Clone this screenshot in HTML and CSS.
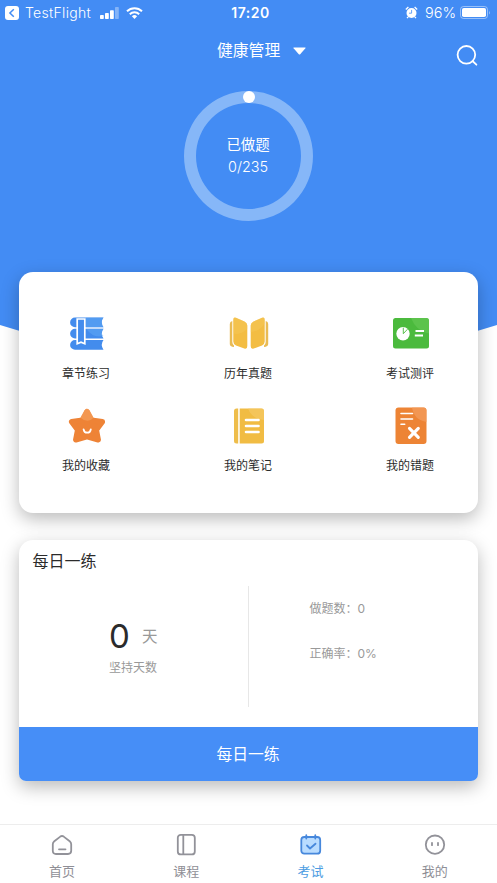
FILE: index.html
```html
<!DOCTYPE html>
<html lang="zh-CN">
<head>
<meta charset="utf-8">
<meta name="viewport" content="width=device-width, initial-scale=1">
<title>健康管理</title>
<link rel="stylesheet" href="styles.css">
</head>
<body>
<div class="app">
  <header class="hero">
    <div class="status">
      <div class="status-left">
        <svg width="14" height="14" viewBox="0 0 14 14"><rect width="14" height="14" rx="3" fill="#fff"/><path d="M8.8 3.2 4.9 7l3.9 3.8" fill="none" stroke="#438cf4" stroke-width="1.5"/></svg>
        <span class="carrier">TestFlight</span>
        <svg class="signal" width="19" height="12" viewBox="0 0 19 12" fill="#fff"><rect y="8" width="3.8" height="4" rx=".8"/><rect x="5" y="6" width="3.8" height="6" rx=".8"/><rect x="10" y="3.3" width="3.8" height="8.7" rx=".8"/><rect x="15" width="3.8" height="12" rx=".8" opacity=".35"/></svg>
        <svg class="wifi" width="17" height="12" viewBox="0 0 17 12"><g fill="none" stroke="#fff" stroke-width="2"><path d="M1 4.3a10.7 10.7 0 0 1 15 0"/><path d="M3.8 7.2a6.7 6.7 0 0 1 9.4 0"/></g><path d="M5.9 9.3a3.7 3.7 0 0 1 5.2 0L8.5 12z" fill="#fff"/></svg>
      </div>
      <div class="clock">17:20</div>
      <div class="status-right">
        <svg width="13" height="13" viewBox="0 0 13 13"><circle cx="6.5" cy="7" r="5" fill="#fff"/><path d="M.8 3.5 3.4 1M12.2 3.5 9.6 1M3.2 10.8 2 12.2M9.8 10.8l1.2 1.4" stroke="#fff" stroke-width="1.3"/><path d="M6.6 3.9v3.3H4" fill="none" stroke="#438cf4" stroke-width=".8"/></svg>
        <span class="percent">96%</span>
        <svg width="31" height="13" viewBox="0 0 31 13"><rect x=".5" y=".5" width="27" height="12" rx="3" fill="none" stroke="#fff" stroke-opacity=".45"/><rect x="2" y="2" width="24" height="9" rx="1.8" fill="#fff"/><path d="M29 4.5q1.7 2 0 4z" fill="#fff" opacity=".45"/></svg>
      </div>
    </div>
    <div class="titlebar">
      <span class="subject">健康管理</span>
      <svg class="caret" width="13" height="8" viewBox="0 0 13 8"><path d="M.8.5h11.4Q13 .5 12.4 1.2L7.2 7.2q-.7.7-1.4 0L.6 1.2Q0 .5.8.5z" fill="#fff"/></svg>
      <svg class="search" width="22" height="22" viewBox="0 0 22 22" fill="none" stroke="#fff" stroke-width="1.8" stroke-linecap="round"><circle cx="10.4" cy="9.8" r="8.8"/><path d="m16.500 16 3.900 3.700"/></svg>
    </div>
    <div class="ring">
      <span>已做题</span>
      <span>0/235</span>
    </div>
  </header>

  <main>
    <section class="card menu">
      <div class="item">
        <svg width="36" height="36" viewBox="0 0 36 36"><g fill="#438ced"><path d="M6 1.500H34.500q-3.500 4.700 0 9.800H6a4.900 4.900 0 0 1 0-9.800z"/><path d="M6 12.700H34.500q-3.500 4.700 0 9.800H6a4.900 4.900 0 0 1 0-9.800z"/><path d="M6 24H34.500q-3.500 4.700 0 9.800H6A4.900 4.900 0 0 1 6 24z"/></g><path d="M17 1.500h17.500q-3.500 4.700 0 9.800H17zM17 12.700h17.500q-3.500 4.700 0 7Q25 23 17 12.700z" fill="#62a9f5" opacity=".5"/><path d="M8.200 3h7.600v24.700l-3.800-1.500-3.800 1.500z" fill="#438ced" stroke="#fff" stroke-width="1.700"/></svg>
        <span>章节练习</span>
      </div>
      <div class="item">
        <svg width="40" height="36" viewBox="0 0 40 36"><path d="M3.300 5Q.8 5.500.8 8v20q0 2.700 4.200 3V29.500Q3.300 28 3.300 26zM36.700 5q2.500.5 2.500 3v20q0 2.700-4.200 3V29.500q1.700-1.500 1.700-3.500z" fill="#e9bb55"/><path d="M7 1.700 15.500 5.500q2.800 1.300 2.800 4v20.500q0 3.600-3 2.600L7 29.500q-2.700-1.200-2.700-4V3.700Q4.300.7 7 1.700zM33 1.700 24.500 5.500q-2.800 1.300-2.800 4v20.500q0 3.600 3 2.600L33 29.500q2.700-1.200 2.700-4V3.700Q35.700.7 33 1.700z" fill="#f3bd43"/><path d="M7 1.700 15.500 5.500q2.800 1.300 2.800 4V13Q10 20 4.300 17V3.700Q4.300.7 7 1.700zM33 1.700 24.500 5.500q-2.800 1.300-2.800 4V16q10-1 14-9V3.700Q35.700.7 33 1.700z" fill="#f7ca60" opacity=".35"/></svg>
        <span>历年真题</span>
      </div>
      <div class="item">
        <svg width="36" height="36" viewBox="0 0 36 36"><rect y="2" width="36" height="30.500" rx="2.500" fill="#4bba3d"/><path d="M18 2h15.500Q36 2 36 4.500v13Q23 15 18 2z" fill="#67c957" opacity=".6"/><circle cx="10" cy="17.700" r="6.700" fill="#fff"/><path d="M10.300 17.700v-6M10.300 17.700l4.200-4.500" stroke="#4bba3d" stroke-width=".9"/><path d="M22.500 15H31M21.800 19.500H30" stroke="#fff" stroke-width="2.200"/></svg>
        <span>考试测评</span>
      </div>
      <div class="item">
        <svg width="38" height="36" viewBox="0 0 38 36"><path d="M19 3.600 23.700 12.200 34.300 13.800 28.300 22 30.200 31.800 19 28.700 7.800 31.800 9.700 22 3.700 13.800 14.300 12.200z" fill="#ee8336" stroke="#ee8336" stroke-width="5.500" stroke-linejoin="round"/><path d="M12.400 9.700 16.600 2.200q2.400-2.700 4.800 0l4.200 7.500Q20 16 12.400 9.700z" fill="#f5a05c" opacity=".7"/><path d="M15.600 21.300q.5 3.400 3.600 3.400t3.600-3.400" fill="none" stroke="#fff" stroke-width="1.800" stroke-linecap="round"/></svg>
        <span>我的收藏</span>
      </div>
      <div class="item">
        <svg width="32" height="36" viewBox="0 0 32 36"><path d="M3.500.5h1.700v35H3.500Q1 35.500 1 33V3Q1 .5 3.500.5z" fill="#eebd4b"/><path d="M6.700.5h21.800Q31 .5 31 3v30q0 2.500-2.500 2.500H6.700z" fill="#f1bc43"/><path d="M15 .5h13.500Q31 .5 31 3v9Q19 11 15 .5z" fill="#f6cc6b" opacity=".6"/><path d="M13 12h12.500M13 18h12.500M13 24h12.500" stroke="#fff" stroke-width="2.600" stroke-linecap="round"/></svg>
        <span>我的笔记</span>
      </div>
      <div class="item">
        <svg width="32" height="38" viewBox="0 0 32 38"><rect x=".5" y=".5" width="31" height="36.500" rx="3" fill="#ed8435"/><path d="M17 .5h11.500q3 0 3 3V15Q19 13 17 .5z" fill="#f49e60" opacity=".7"/><path d="M6 6.500h11.500M6 12h11.500M6 17.200h3.700" stroke="#fff" stroke-width="1.600" stroke-linecap="round"/><path d="m14.500 21.300 8.800 9m0-9-8.800 9" stroke="#fff" stroke-width="3.100" stroke-linecap="round"/></svg>
        <span>我的错题</span>
      </div>
    </section>

    <section class="card daily">
      <h2>每日一练</h2>
      <div class="stats">
        <div class="days">
          <div class="count"><strong>0</strong><span>天</span></div>
          <div class="caption">坚持天数</div>
        </div>
        <div class="figures">
          <p>做题数：<span>0</span></p>
          <p>正确率：<span>0%</span></p>
        </div>
      </div>
      <button class="start">每日一练</button>
    </section>
  </main>

  <nav class="tabs">
    <a class="tab">
      <svg width="24" height="24" viewBox="0 0 24 24" fill="none" stroke="#929299" stroke-width="1.800" stroke-linecap="round" stroke-linejoin="round"><path d="M10.300 3.600q1.700-1.200 3.400 0l6 4.700q1.500 1.200 1.500 3v6.500q0 3.200-3.200 3.200H6q-3.200 0-3.200-3.200v-6.500q0-1.800 1.500-3z"/><path d="M9 16.300h6.500"/></svg>
      <span>首页</span>
    </a>
    <a class="tab">
      <svg width="24" height="24" viewBox="0 0 24 24" fill="none" stroke="#929299" stroke-width="1.800"><rect x="3.800" y="1.800" width="17" height="19.600" rx="3"/><path d="M9.300 1.800v19.600"/></svg>
      <span>课程</span>
    </a>
    <a class="tab active">
      <svg width="24" height="24" viewBox="0 0 24 24" fill="none" stroke="#4788dc" stroke-width="1.800" stroke-linecap="round" stroke-linejoin="round"><rect x="2.300" y="4" width="18.900" height="16.700" rx="3" fill="#b9dcff"/><path d="M7.300 2.200v3.300M16.300 2.200v3.300M8 12.500l3 3 5.500-4.800"/></svg>
      <span>考试</span>
    </a>
    <a class="tab">
      <svg width="24" height="24" viewBox="0 0 24 24" fill="none" stroke="#929299" stroke-width="1.800" stroke-linecap="round"><circle cx="12" cy="11.700" r="9.200"/><path d="M9 9.800v2.400M15 9.800v2.400"/></svg>
      <span>我的</span>
    </a>
  </nav>
</div>
</body>
</html>
```
FILE: styles.css
```css
* { box-sizing: border-box; }

body {
  margin: 0;
  background: #fff;
  color: #2b2b2b;
  font-family: Inter, "Noto Sans CJK SC", sans-serif;
}

svg { display: block; flex: none; }

.app {
  position: relative;
  isolation: isolate;
  display: flex;
  flex-direction: column;
  height: 883px;
  overflow: hidden;
}

.app::before {
  content: "";
  position: absolute;
  z-index: -1;
  inset: 0 0 auto;
  height: 400px;
  background: #438cf4;
  clip-path: polygon(0 0, 100% 0, 100% 325px, 50% 400px, 0 325px);
}

.hero {
  height: 272px;
  flex: none;
  color: #fff;
}

.status {
  display: grid;
  grid-template-columns: 1fr auto 1fr;
  align-items: center;
  height: 25px;
  padding: 0 6px 0 5px;
  font-size: 14px;
}

.status-left, .status-right {
  display: flex;
  align-items: center;
}

.status-right { justify-content: flex-end; }
.carrier { margin-left: 6px; width: 66px; font-weight: 300; letter-spacing: .3px; white-space: nowrap; }
.signal { margin-left: 9px; }
.wifi { margin-left: 7px; }
.clock { font-size: 14px; font-weight: 600; letter-spacing: .5px; transform: translateX(2.5px); }
.percent { margin: 0 4px 0 7px; font-size: 14.5px; font-weight: 300; }

.titlebar {
  display: flex;
  align-items: center;
  height: 50px;
  padding: 0 19px 0 217px;
}

.subject { margin-top: 2px; font-size: 15.8px; line-height: 24px; }
.caret { margin: 2px 0 0 13px; }
.search { margin: 11px 0 0 auto; }

.ring {
  display: flex;
  flex-direction: column;
  align-items: center;
  justify-content: center;
  position: relative;
  width: 129px;
  height: 130px;
  margin: 16px auto 0;
  border: 12px solid #86b7f8;
  border-radius: 50%;
  font-size: 14.4px;
  font-weight: 300;
  line-height: 22px;
}

.ring::before {
  content: "";
  position: absolute;
  top: -12px;
  left: 50%;
  width: 12px;
  height: 12px;
  margin-left: -6px;
  border-radius: 50%;
  background: #fff;
}

.ring span { margin-left: -1px; }
.ring span:first-child { font-weight: 400; }

main { flex: 1; padding: 0 19px; }

.card {
  height: 241px;
  border-radius: 14px;
  background: #fff;
  box-shadow: 0 6px 18px rgba(0, 0, 0, .27);
}

.menu {
  display: grid;
  grid-template-columns: repeat(3, 60px);
  grid-auto-rows: 92px;
  justify-content: center;
  column-gap: 102px;
  padding-top: 43px;
}

.item {
  display: flex;
  flex-direction: column;
  align-items: center;
  font-size: 12px;
  line-height: 18px;
}

.item svg { height: 38px; margin-bottom: 12px; }
.item span { margin-left: -1px; }

.daily {
  display: flex;
  flex-direction: column;
  margin-top: 27px;
  border-radius: 14px 14px 7px 7px;
}

.daily h2 {
  margin: 9px 0 0 13.5px;
  font-size: 16px;
  font-weight: 400;
  line-height: 24px;
}

.stats {
  display: grid;
  grid-template-columns: 1fr 1fr;
  height: 121px;
  margin-top: 13px;
  color: #999;
}

.days {
  display: flex;
  flex-direction: column;
  padding: 29px 0 0 90px;
  border-right: 1px solid #e7e7e7;
}

.count {
  display: flex;
  align-items: center;
  height: 43px;
  font-size: 15.5px;
}

.count span { margin-top: -4px; }

.count strong {
  width: 20px;
  margin-right: 13px;
  color: #2b2b2b;
  font-size: 33px;
  font-weight: 400;
  line-height: 43px;
}

.caption { margin-top: 1px; font-size: 12px; line-height: 18px; }
.figures { padding: 14px 0 0 61px; font-size: 12px; }
.figures p { margin: 0 0 27px; line-height: 18px; }

.start {
  height: 54px;
  margin-top: auto;
  padding: 0 1px 1px 0;
  border: 0;
  border-radius: 0 0 7px 7px;
  background: #468ef7;
  color: #fff;
  font: inherit;
  font-size: 15.8px;
}

.tabs {
  display: grid;
  grid-template-columns: repeat(4, 1fr);
  height: 59px;
  border-top: 1px solid #ededed;
  background: #fff;
}

.tab {
  display: flex;
  flex-direction: column;
  align-items: center;
  padding-top: 8px;
  color: #8f8f96;
  font-size: 13px;
  line-height: 20px;
}

.tab span { margin-top: 4px; }
.active { color: #4c9ce2; }
```
